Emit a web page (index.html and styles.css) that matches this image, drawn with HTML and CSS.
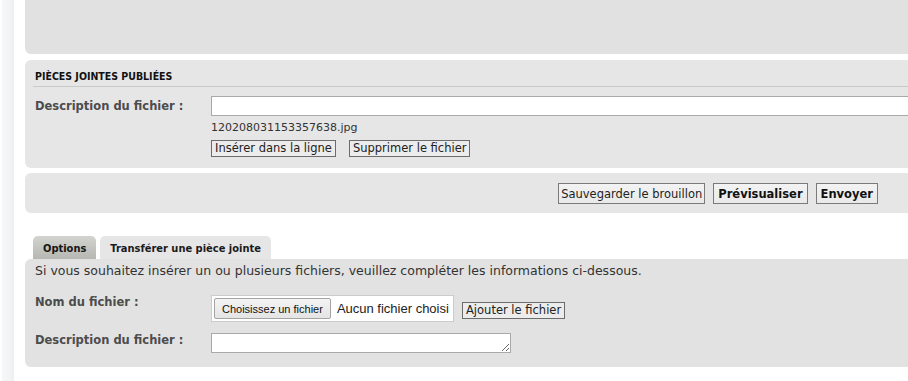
FILE: index.html
```html
<!DOCTYPE html>
<html lang="fr">
<head>
<meta charset="utf-8">
<title>Pièces jointes</title>
<link rel="stylesheet" href="styles.css">
</head>
<body>
<div class="page">
  <div class="strip"></div>
  <div class="main">
    <div class="panel panel-top"></div>

    <div class="panel panel-attach">
      <h3 class="panel-title">PIÈCES JOINTES PUBLIÉES</h3>
      <div class="row row-desc">
        <label class="lbl">Description du fichier :</label>
        <input class="text-in" type="text">
      </div>
      <div class="row">
        <div class="lbl"></div>
        <div class="file-info">
          <div class="fname">120208031153357638.jpg</div>
          <div class="btns">
            <button class="btn btn-sm">Insérer dans la ligne</button>
            <button class="btn btn-sm">Supprimer le fichier</button>
          </div>
        </div>
      </div>
    </div>

    <div class="panel panel-actions">
      <button class="btn btn-lg">Sauvegarder le brouillon</button>
      <button class="btn btn-lg btn-bold">Prévisualiser</button>
      <button class="btn btn-lg btn-bold">Envoyer</button>
    </div>

    <div class="tabs">
      <span class="tab">Options</span>
      <span class="tab tab-active">Transférer une pièce jointe</span>
    </div>

    <div class="panel panel-upload">
      <p class="intro">Si vous souhaitez insérer un ou plusieurs fichiers, veuillez compléter les informations ci-dessous.</p>
      <div class="row row-file">
        <label class="lbl">Nom du fichier :</label>
        <div class="file-box">
          <span class="file-btn">Choisissez un fichier</span>
          <span class="file-none">Aucun fichier choisi</span>
        </div>
        <button class="btn btn-sm btn-add">Ajouter le fichier</button>
      </div>
      <div class="row row-ta">
        <label class="lbl">Description du fichier :</label>
        <textarea class="ta"></textarea>
      </div>
    </div>
  </div>
</div>
</body>
</html>
```

FILE: styles.css
```css
html, body {
  margin: 0;
  padding: 0;
  background: #ffffff;
  overflow: hidden;
}

body {
  font-family: "DejaVu Sans", Verdana, sans-serif;
  font-size: 11px;
  color: #333333;
}

.page {
  display: flex;
  min-height: 381px;
}

.strip {
  width: 12px;
  margin-left: 2px;
  background: linear-gradient(to right, #f6f7f8 0%, #f1f3f5 70%, #eceef1 100%);
  flex: none;
}

.main {
  flex: 1;
  margin-left: 11px;
  display: flex;
  flex-direction: column;
}

.panel {
  background: #e6e6e6;
  border-radius: 6px 0 0 6px;
  flex: none;
}

.panel-top {
  height: 54px;
  background: #e1e1e1;
  border-radius: 0 0 0 6px;
  margin-bottom: 6px;
}

.panel-attach {
  padding: 10px 0 11px 10px;
}

.panel-title {
  margin: 0 0 0 -2px;
  padding: 0 0 3px 2px;
  font-family: "DejaVu Sans Condensed", Tahoma, sans-serif;
  font-weight: bold;
  font-size: 10.5px;
  line-height: 13px;
  color: #111111;
  border-bottom: 1px solid #c9c9c9;
}

.row {
  display: flex;
  align-items: flex-start;
}

.lbl {
  width: 176px;
  flex: none;
  font-weight: bold;
  font-size: 11.5px;
  line-height: 14px;
  color: #4c4c4c;
}

.row-desc {
  margin-top: 9px;
  align-items: center;
}

.text-in {
  flex: 1;
  height: 20px;
  box-sizing: border-box;
  margin: 0;
  border: 1px solid #a9a9a9;
  border-right: none;
  background: #ffffff;
  padding: 0 3px;
}

.file-info {
  display: flex;
  flex-direction: column;
}

.fname {
  margin-top: 5px;
  line-height: 14px;
  font-size: 11px;
  color: #333333;
}

.btns {
  margin-top: 5px;
  display: flex;
  gap: 13px;
}

.btn {
  font-family: "DejaVu Sans", Verdana, sans-serif;
  font-size: 11.5px;
  color: #222222;
  background: #ececec;
  border: 1px solid #6c6c6c;
  border-radius: 0;
  margin: 0;
  box-sizing: border-box;
}

.btn-sm {
  height: 17px;
  padding: 0 3px;
  line-height: 15px;
}

.panel-actions {
  margin-top: 5px;
  padding: 10px 30px 9px 10px;
  display: flex;
  justify-content: flex-end;
  gap: 8px;
}

.btn-lg {
  height: 21px;
  padding: 0 2px;
  background: linear-gradient(#f3f3f3, #e9e9e9);
  border-color: #7a7a7a;
}

.btn-bold {
  font-weight: bold;
  color: #111111;
  padding: 0 4px;
}

.tabs {
  margin-top: 23px;
  padding-left: 8px;
  display: flex;
  gap: 4px;
  height: 23px;
  flex: none;
}

.tab {
  display: flex;
  align-items: center;
  padding: 2px 10px 0;
  font-family: "DejaVu Sans Condensed", Tahoma, sans-serif;
  font-weight: bold;
  font-size: 11px;
  color: #151515;
  border-radius: 5px 5px 0 0;
  background: linear-gradient(#d3d3d0, #b6b6b3);
}

.tab-active {
  background: #e6e6e6;
  color: #1a1a1a;
}

.panel-upload {
  background: #e2e2e2;
  padding: 5px 0 14px 10px;
}

.intro {
  margin: 0;
  font-size: 12.5px;
  line-height: 14px;
  color: #333333;
}

.row-file {
  margin-top: 17px;
}

.file-box {
  width: 243px;
  height: 27px;
  box-sizing: border-box;
  background: #ffffff;
  border: 1px solid #cccccc;
  display: flex;
  align-items: center;
  padding: 0 2px;
  gap: 6px;
}

.file-btn {
  height: 21px;
  box-sizing: border-box;
  padding: 0 7px;
  display: flex;
  align-items: center;
  font-family: "Liberation Sans", Arial, sans-serif;
  font-size: 11px;
  color: #111111;
  background: linear-gradient(#f4f4f4, #e4e4e4);
  border: 1px solid #a4a4a4;
  border-radius: 2px;
}

.file-none {
  font-family: "Liberation Sans", Arial, sans-serif;
  font-size: 13px;
  color: #222222;
}

.btn-add {
  margin-left: 8px;
  margin-top: 7px;
}

.row-ta {
  margin-top: 11px;
}

.ta {
  width: 300px;
  height: 20px;
  box-sizing: border-box;
  margin: 0;
  border: 1px solid #a9a9a9;
  background: #ffffff;
  resize: both;
  padding: 0 2px;
}
```
